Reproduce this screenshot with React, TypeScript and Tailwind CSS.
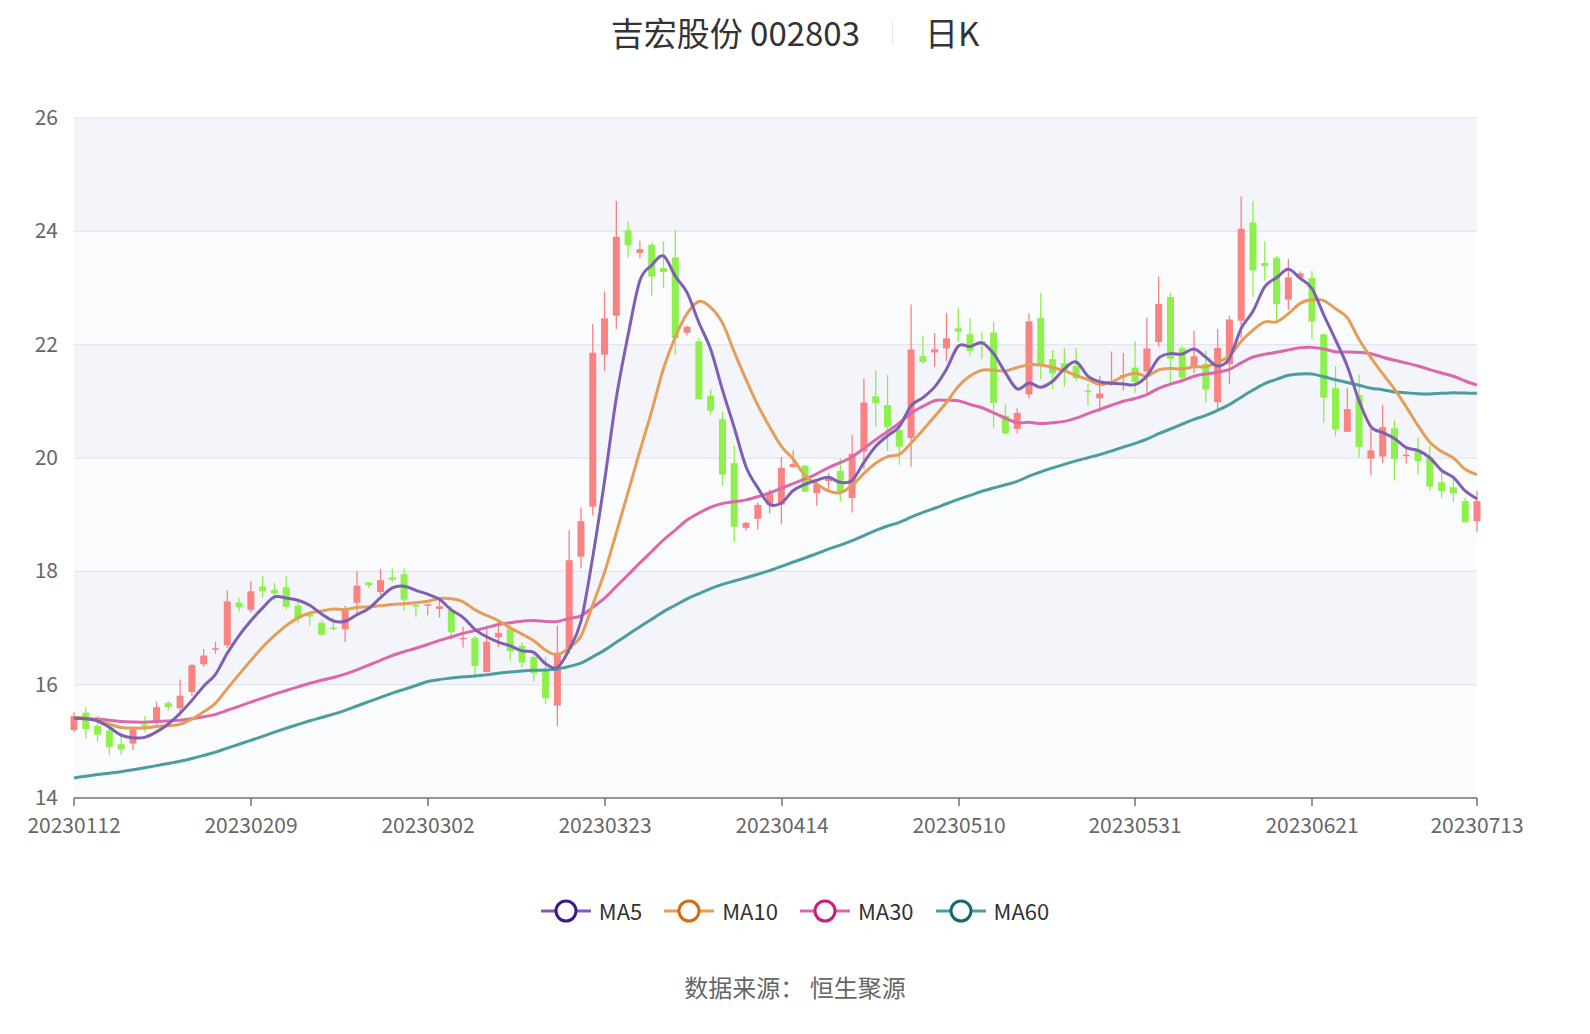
import React from 'react';

const X0 = 74;
const X1 = 1477;
const N = 120;
const STEP = (X1 - X0) / (N - 1);
const yOf = (p: number) => 118 + (26 - p) * 56.67;
const xOf = (i: number) => X0 + i * STEP;

// keypoints: [pixel x, price]
const keys: [number, number][] = [
  [74, 15.3], [110, 15.0], [140, 15.1], [190, 16.1], [230, 17.3], [255, 17.7], [275, 17.6],
  [300, 17.2], [320, 16.9], [345, 17.3], [380, 18.1], [420, 17.3], [450, 17.1], [470, 16.5],
  [500, 16.8], [530, 16.3], [545, 15.8], [560, 16.9], [580, 19.0], [595, 21.5], [610, 23.6],
  [625, 24.3], [640, 23.5], [655, 23.2], [675, 22.6], [700, 21.4], [715, 20.0], [735, 18.8],
  [760, 19.0], [785, 20.5], [800, 19.4], [820, 19.8], [840, 19.2], [860, 20.8], [880, 20.6],
  [900, 20.5], [915, 22.0], [935, 21.7], [955, 22.5], [975, 22.0], [995, 21.3], [1015, 20.2],
  [1030, 22.3], [1060, 21.6], [1085, 21.0], [1110, 21.6], [1130, 21.5], [1160, 22.4],
  [1190, 21.5], [1210, 21.6], [1230, 23.0], [1245, 23.9], [1260, 23.0], [1280, 23.0],
  [1300, 23.6], [1315, 22.3], [1330, 21.0], [1350, 20.5], [1370, 20.4], [1400, 20.1],
  [1430, 19.6], [1450, 19.5], [1465, 19.0], [1477, 19.1],
];

const interp = (x: number) => {
  for (let k = 0; k < keys.length - 1; k++) {
    const [xa, pa] = keys[k];
    const [xb, pb] = keys[k + 1];
    if (x >= xa && x <= xb) return pa + ((x - xa) / (xb - xa)) * (pb - pa);
  }
  return keys[keys.length - 1][1];
};

let seed = 7;
const rnd = () => {
  seed = (seed * 16807) % 2147483647;
  return seed / 2147483647;
};

type Candle = { o: number; c: number; h: number; l: number };
const candles: Candle[] = [];
let prev = 15.3;
for (let i = 0; i < N; i++) {
  const target = interp(xOf(i));
  const vol = 0.15 + Math.abs(target - prev) * 0.3 + (target > 20 ? 0.35 : 0.1);
  const o = prev + (rnd() - 0.5) * vol * 0.8;
  const c = target + (rnd() - 0.5) * vol * 1.4;
  const h = Math.max(o, c) + rnd() * vol * 0.9;
  const l = Math.min(o, c) - rnd() * vol * 0.7;
  candles.push({ o, c, h, l });
  prev = c;
}

// history before the first day, so the long averages start where the reference does
const hist: number[] = [];
for (let i = 0; i < 59; i++) hist.push((i < 30 ? 13.3 : 15.4) + Math.sin(i) * 0.15);
const closes = [...hist, ...candles.map((d) => d.c)];
const ma = (n: number) =>
  candles.map((_, i) => {
    const idx = i + 59;
    const s = closes.slice(Math.max(0, idx - n + 1), idx + 1);
    return s.reduce((a, b) => a + b, 0) / s.length;
  });

const smoothPath = (vals: number[]) => {
  const pts = vals.map((v, i) => [xOf(i), yOf(v)]);
  let d = `M${pts[0][0]},${pts[0][1]}`;
  for (let i = 0; i < pts.length - 1; i++) {
    const p0 = pts[Math.max(0, i - 1)];
    const p1 = pts[i];
    const p2 = pts[i + 1];
    const p3 = pts[Math.min(pts.length - 1, i + 2)];
    const c1 = [p1[0] + (p2[0] - p0[0]) / 6, p1[1] + (p2[1] - p0[1]) / 6];
    const c2 = [p2[0] - (p3[0] - p1[0]) / 6, p2[1] - (p3[1] - p1[1]) / 6];
    d += ` C${c1[0]},${c1[1]} ${c2[0]},${c2[1]} ${p2[0]},${p2[1]}`;
  }
  return d;
};

const lines = [
  { name: 'MA5', n: 5, color: '#7f5fb3', dot: '#3c1a8c' },
  { name: 'MA10', n: 10, color: '#e49e58', dot: '#d8690e' },
  { name: 'MA30', n: 30, color: '#da68aa', dot: '#c81d7d' },
  { name: 'MA60', n: 60, color: '#4b9d9f', dot: '#0f6b6c' },
];

const xLabels = ['20230112', '20230209', '20230302', '20230323', '20230414', '20230510', '20230531', '20230621', '20230713'];
const xLabelPos = [74, 251, 428, 605, 782, 959, 1135, 1312, 1477];

const font = '"Noto Sans CJK SC", "Noto Sans", sans-serif';

export default function App() {
  return (
    <div className="w-[1590px] h-[1034px] bg-white" style={{ fontFamily: font }}>
      <div className="h-[66px] flex items-center justify-center text-[33px] text-[#333]">
        <span>吉宏股份 002803</span>
        <span className="mx-8 w-px h-6 bg-[#e5e5e5]" />
        <span>日K</span>
      </div>
      <svg width={1590} height={794} viewBox="0 66 1590 794" className="block">
        {[0, 1, 2, 3, 4, 5].map((k) => (
          <rect key={k} x={X0} y={118 + k * 113.33} width={X1 - X0} height={113.33} fill={k % 2 === 0 ? '#f4f5fa' : '#fafbfd'} />
        ))}
        {[26, 24, 22, 20, 18, 16].map((p) => (
          <line key={p} x1={X0} x2={X1} y1={yOf(p)} y2={yOf(p)} stroke="#dde1ee" strokeWidth={1} />
        ))}
        {[26, 24, 22, 20, 18, 16, 14].map((p) => (
          <text key={p} x={58} y={yOf(p) + 7} textAnchor="end" fontSize={21} fill="#666" fontFamily={font}>{p}</text>
        ))}
        <line x1={X0} x2={X1} y1={798} y2={798} stroke="#6e7079" strokeWidth={1.5} />
        {xLabelPos.map((x, i) => (
          <g key={i}>
            <line x1={x} x2={x} y1={798} y2={806} stroke="#6e7079" strokeWidth={1.5} />
            <text x={x} y={833} textAnchor="middle" fontSize={21} fill="#666" fontFamily={font}>{xLabels[i]}</text>
          </g>
        ))}
        {candles.map((d, i) => {
          const up = d.c >= d.o;
          const col = up ? '#f98383' : '#8df04c';
          const x = xOf(i);
          const top = yOf(Math.max(d.o, d.c));
          const bot = yOf(Math.min(d.o, d.c));
          return (
            <g key={i}>
              <line x1={x} x2={x} y1={yOf(d.h)} y2={yOf(d.l)} stroke={col} strokeWidth={1.3} />
              <rect x={x - 3.5} y={top} width={7} height={Math.max(1.5, bot - top)} fill={col} />
            </g>
          );
        })}
        {lines.slice().reverse().map((l) => (
          <path key={l.name} d={smoothPath(ma(l.n))} fill="none" stroke={l.color} strokeWidth={3} />
        ))}
      </svg>
      <div className="flex justify-center items-center gap-[22px] mt-[34px] text-[22px] text-[#333]">
        {lines.map((l) => (
          <div key={l.name} className="flex items-center gap-[8px]">
            <svg width={50} height={26} viewBox="0 0 50 26">
              <line x1={0} x2={50} y1={13} y2={13} stroke={l.color} strokeWidth={3} />
              <circle cx={25} cy={13} r={10} fill="#fff" stroke={l.dot} strokeWidth={3} />
            </svg>
            <span>{l.name}</span>
          </div>
        ))}
      </div>
      <div className="text-center text-[24px] text-[#666] mt-[42px]">数据来源：&nbsp;恒生聚源</div>
    </div>
  );
}
